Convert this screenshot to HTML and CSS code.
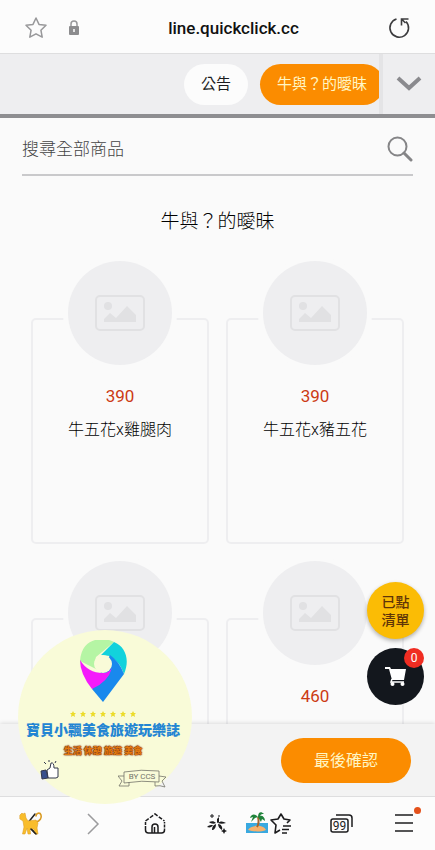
FILE: index.html
```html
<!DOCTYPE html>
<html lang="zh-Hant">
<head>
  <meta charset="UTF-8" />
  <meta name="viewport" content="width=device-width, initial-scale=1.0" />
  <title>line.quickclick.cc</title>
  <link rel="stylesheet" href="styles.css">
</head>
<body>
  <!-- image placeholder shared by the product cards -->
  <svg class="defs" width="0" height="0" aria-hidden="true">
    <symbol id="no-photo" viewBox="0 0 50 36">
      <rect x="1" y="1" width="48" height="34" rx="4" fill="none" stroke="#e1e1e3" stroke-width="2" />
      <circle cx="13" cy="11" r="4" fill="#e1e1e3" />
      <path d="M9 27v-3l6-6 6 5 11-12 9 9v7z" fill="#e1e1e3" />
    </symbol>
  </svg>

  <header class="address-bar">
    <button class="icon-button" type="button" aria-label="加入書籤">
      <svg width="24" height="24" viewBox="0 0 24 24" fill="none" stroke="#98989a" stroke-width="1.5" stroke-linejoin="round">
        <path d="M12 2l3 6.400 7 .9-5.100 4.900 1.300 7L12 17.800 5.800 21.200l1.300-7L2 9.300l7-.9z" />
      </svg>
    </button>
    <svg class="lock" width="12" height="16" viewBox="0 0 12 16">
      <path d="M3 7V4a3 3 0 0 1 6 0v3" fill="none" stroke="#98989a" stroke-width="1.500" />
      <rect x="1" y="6" width="10" height="9" rx="1" fill="#8c8c8e" />
      <path d="M6 9v3" stroke="#fff" stroke-width="1.500" />
    </svg>
    <span class="url">line.quickclick.cc</span>
    <button class="icon-button" type="button" aria-label="重新整理">
      <svg width="24" height="24" viewBox="0 0 24 24" fill="none" stroke="#3c3c3e" stroke-width="1.600">
        <path d="M9.500 3a9.300 9.300 0 1 0 9.500 2.500M14.500 9.500V3h7M14.500 3l4 4" />
      </svg>
    </button>
  </header>

  <nav class="categories">
    <div class="category-list">
      <a class="category" href="#">公告</a>
      <a class="category active" href="#">牛與？的曖昧</a>
    </div>
    <button class="category-toggle" type="button" aria-label="展開分類">
      <svg width="26" height="18" viewBox="0 0 26 18" fill="none" stroke="#8a8a8e" stroke-width="4">
        <path d="M2 3l11 10L24 3" />
      </svg>
    </button>
  </nav>

  <main class="menu">
    <form class="search">
      <input type="search" aria-label="搜尋全部商品" placeholder="搜尋全部商品" />
      <button class="icon-button" type="submit" aria-label="搜尋">
        <svg width="26" height="26" viewBox="0 0 26 26" fill="none" stroke="#858587">
          <circle cx="10.500" cy="10.500" r="9" stroke-width="2" />
          <path d="M17 17l7 7" stroke-width="3" stroke-linecap="round" />
        </svg>
      </button>
    </form>

    <h1>牛與？的曖昧</h1>

    <div class="products">
      <article class="product">
        <div class="photo"><svg width="50" height="36"><use href="#no-photo" /></svg></div>
        <p class="price">390</p>
        <h2>牛五花x雞腿肉</h2>
      </article>
      <article class="product">
        <div class="photo"><svg width="50" height="36"><use href="#no-photo" /></svg></div>
        <p class="price">390</p>
        <h2>牛五花x豬五花</h2>
      </article>
      <article class="product">
        <div class="photo"><svg width="50" height="36"><use href="#no-photo" /></svg></div>
      </article>
      <article class="product">
        <div class="photo"><svg width="50" height="36"><use href="#no-photo" /></svg></div>
        <p class="price">460</p>
      </article>
    </div>
  </main>

  <div class="confirm-bar">
    <button class="confirm" type="button">最後確認</button>
  </div>

  <footer class="toolbar">
    <button class="icon-button" type="button" aria-label="上一頁">
      <svg width="26" height="26" viewBox="0 0 26 26" fill="none" stroke-linecap="round" stroke-linejoin="round">
        <path d="M17 3l-8 10 8 9" stroke="#222" stroke-width="1.500" />
        <path d="M18 11c4-1 6-4 5-7s-5-2-5 1" stroke="#d99a22" stroke-width="1.600" />
        <path d="M2 4l2-2 1 1 2-1 1 5 2 3 8-1 2 3-1 5 1 6h-3l-1-5-4 .5.500 4.500H10l-1-6-2 6H4.500l1.500-7-1-6-3-2z" fill="#f9bd2b" stroke="#dfa023" stroke-width=".6" />
        <path d="M13 18l5 5" stroke="#222" stroke-width="1.500" />
      </svg>
    </button>
    <button class="icon-button" type="button" aria-label="下一頁">
      <svg width="26" height="26" viewBox="0 0 26 26" fill="none" stroke="#9b9b9d" stroke-width="1.500">
        <path d="M8 3l10 10L8 23" />
      </svg>
    </button>
    <button class="icon-button" type="button" aria-label="首頁">
      <svg width="26" height="26" viewBox="0 0 26 26" fill="none" stroke="#1c1c1e" stroke-width="1.500">
        <path d="M3.500 10L13 3l9.500 7" stroke-dasharray="4 1.500" />
        <path d="M3.500 11v8q0 3 3 3h13q3 0 3-3v-8" stroke-dasharray="3 1 28 1" />
        <path d="M10 22v-6q0-3 3-3t3 3v6M12.500 16v6" />
      </svg>
    </button>
    <button class="icon-button" type="button" aria-label="探索">
      <svg width="26" height="26" viewBox="0 0 26 26" fill="#1c1c1e">
        <path d="M5 11c3-1 5-1 7 1-2 1-5 1-7-1zM14 12c2-2 5-2 8 0-3 1-6 1-8 0zM12 13c0 4-2 6-4 6 0-3 1-5 4-6zM14 13c3 0 5 3 4 6-2-1-4-3-4-6zM3 16c2-2 4-2 6-2-1 2-3 3-6 2zM13 8l2-2v5l-2 1zM20 17l1 2 2 1-2 1-1 2-1-2-2-1 2-1z" />
        <path d="M8 3v4M6 5h4M15 4v2" fill="none" stroke="#1c1c1e" />
      </svg>
    </button>
    <button class="icon-button bookmarks" type="button" aria-label="書籤">
      <svg width="46" height="26" viewBox="0 0 46 26" fill="none">
        <path d="M0 12h22v10H0z" fill="#39a9e0" />
        <path d="M2 19c2-5 15-6 18 0-5 2-13 2-18 0z" fill="#f6b16c" />
        <path d="M11 16c2-3 2-6 1-10" stroke="#a5652d" stroke-width="2" />
        <path d="M12 6C9 2 5 3 4 7l3-1-2 5 4-4 3-1 3 5 1-3 3 2c0-4-3-6-5-5 1-2 2-2 4-2-3-3-6-2-6 3z" fill="#20833b" />
        <path d="M41 12l3-3-6-1-3-5-3 5-7 1 5 5-1 8 5-3" stroke="#1c1c1e" stroke-width="1.600" stroke-linejoin="round" />
        <path d="M37 15h8M36 18.500h7M36 22h5" stroke="#1c1c1e" stroke-width="1.500" />
      </svg>
    </button>
    <button class="icon-button" type="button" aria-label="分頁">
      <svg width="26" height="26" viewBox="0 0 26 26" fill="none" stroke="#1c1c1e" stroke-width="1.500">
        <path d="M7 4h13q3 0 3 3v9" />
        <rect x="2" y="8" width="17" height="13" rx="2" />
        <text class="tab-count" x="10.500" y="19" text-anchor="middle">99</text>
      </svg>
    </button>
    <button class="icon-button" type="button" aria-label="選單">
      <svg width="26" height="26" viewBox="0 0 26 26" stroke="#1c1c1e" stroke-width="1.600">
        <path d="M4 4h18M4 12h18M4 20h18" />
      </svg>
      <span class="dot"></span>
    </button>
  </footer>

  <div class="floating">
    <button class="ordered" type="button">已點<br>清單</button>
    <button class="cart" type="button" aria-label="購物車">
      <svg width="24" height="24" viewBox="0 0 24 24" fill="#fff">
        <path d="M1 2h5l1 2h15l-2 11H8L5 4H1z" />
        <path d="M8 14l-1 3h13" fill="none" stroke="#fff" stroke-width="1.500" />
        <circle cx="8.500" cy="19" r="2" />
        <circle cx="18.500" cy="19" r="2" />
      </svg>
      <span class="badge">0</span>
    </button>
  </div>

  <div class="sticker">
    <svg class="pin" width="48" height="62" viewBox="0 0 48 62">
      <path d="M1 21C3-6 29-2 35 2L17 17q-3 8 4 14z" fill="#b5f5a4" />
      <path d="M22 15L35 2c12 5 16 18 10 32q-4-12-14-18z" fill="#12d2dc" />
      <path d="M31 15q9 6 14 19L24 62 13 49z" fill="#1989ed" />
      <path d="M1 20q8 13 23 13 6 0 9-5-4 14-20 21Q1 34 1 20z" fill="#f41bfb" />
      <circle cx="24" cy="24" r="9" fill="#f9fbd8" />
    </svg>
    <svg class="stars" width="66" height="6" viewBox="0 0 66 6" fill="#ecdc2a">
      <defs>
        <path id="star" d="M3 0l1 2h2L4.500 3.500 5 6 3 4.700 1 6l.5-2.500L0 2h2z" />
      </defs>
      <use href="#star" />
      <use href="#star" x="10" />
      <use href="#star" x="20" />
      <use href="#star" x="30" />
      <use href="#star" x="40" />
      <use href="#star" x="50" />
      <use href="#star" x="60" />
    </svg>
    <div class="sticker-title">寶貝小飄美食旅遊玩樂誌</div>
    <div class="sticker-tags">生活 休憩 旅遊 美食</div>
    <div class="sticker-foot">
      <svg class="thumb" width="20" height="22" viewBox="0 0 20 22" fill="#fff" stroke="#33384d" stroke-width="1">
        <path d="M7 11l3-2 1-5q3-1 3 5h4v9l-2 1H8z" />
        <path d="M1 12l5-1 2 8-6 1z" fill="#39508d" />
        <path d="M6 5L4 3M9 3V1M15 4l1-2" />
      </svg>
      <svg width="48" height="20" viewBox="0 0 48 20" fill="none" stroke="#74746a" stroke-width=".8">
        <path d="M6 3q17-3 35-1v11q-17-2-35 1zM6 7H0l4 5-3 5h10v-4M41 7l7 1-4 4 3 6q-5-2-10-1v-4" />
        <text class="ribbon-text" x="24" y="10" text-anchor="middle">BY CCS</text>
      </svg>
    </div>
  </div>
</body>
</html>
```

FILE: styles.css
```css
* { box-sizing: border-box; margin: 0; padding: 0; }
body {
  font-family: Roboto, "Noto Sans CJK TC", sans-serif;
  background: #fafafa;
  color: #1c1c1e;
  height: 100vh;
  display: flex;
  flex-direction: column;
  position: relative;
  overflow: hidden;
}
button {
  font-family: inherit;
  border: none;
  background: none;
  cursor: pointer;
}
a { text-decoration: none; }
svg { display: block; }
.defs { position: absolute; }
.icon-button { position: relative; }

.address-bar {
  display: flex;
  align-items: center;
  height: 54px;
  padding: 2px 24px 0;
  background: #fcfcfc;
  border-bottom: 1px solid #dededf;
}
.lock { margin-left: 20px; }
.url {
  flex: 1;
  text-align: center;
  font-size: 17px;
  font-weight: 500;
  color: #111;
}

.categories {
  display: flex;
  height: 64px;
  background: #eeeef0;
  border-bottom: 4px solid #8e8e91;
}
.category-list {
  flex: 1;
  display: flex;
  justify-content: flex-end;
  align-items: center;
  gap: 12px;
  overflow: hidden;
}
.category {
  padding: 0 17px;
  border-radius: 21px;
  background: #fcfcfc;
  color: #1c1c1e;
  font-size: 15px;
  line-height: 41px;
  white-space: nowrap;
}
.category.active {
  margin-right: -5px;
  background: #fb8c00;
  color: #fff6c4;
}
.category-toggle {
  display: flex;
  justify-content: center;
  align-items: center;
  width: 56px;
  border-left: 4px solid #e4e4e6;
}

.menu {
  flex: 1;
  min-height: 0;
  overflow: hidden;
  padding: 0 22px;
}
.search {
  display: flex;
  align-items: center;
  height: 58px;
  padding-top: 6px;
  border-bottom: 2px solid #c9c9cb;
}
.search input {
  flex: 1;
  min-width: 0;
  border: none;
  outline: none;
  background: none;
  font-family: inherit;
  font-size: 17px;
  font-weight: 300;
}
.search input::placeholder { color: #444; }
.menu h1 {
  margin-top: 32px;
  text-align: center;
  color: #000;
  font-size: 19px;
  font-weight: 300;
  line-height: 28px;
}
.products {
  display: grid;
  grid-template-columns: 1fr 1fr;
  gap: 74px 17px;
  padding: 82px 9px 0;
}
.product {
  display: flex;
  flex-direction: column;
  align-items: center;
  height: 226px;
  border: 2px solid #eeeef0;
  border-radius: 5px;
}
.photo {
  display: flex;
  justify-content: center;
  align-items: center;
  width: 104px;
  height: 104px;
  margin-top: -59px;
  border-radius: 50%;
  background: #eeeef0;
  box-shadow: 0 0 0 5px #fafafa;
}
.price {
  margin-top: 19px;
  color: #cc3a14;
  font-size: 17px;
  line-height: 24px;
}
.product h2 {
  margin-top: 10px;
  color: #000;
  font-size: 16px;
  font-weight: 300;
  line-height: 24px;
}

.confirm-bar {
  display: flex;
  justify-content: flex-end;
  align-items: center;
  height: 72px;
  padding: 0 24px;
  background: #f3f3f3;
  box-shadow: 0 -1px 4px rgba(0,0,0,0.12);
}
.confirm {
  width: 130px;
  height: 45px;
  padding-bottom: 2px;
  border-radius: 23px;
  background: #fb8c00;
  color: #fff6c4;
  font-size: 16px;
}

.toolbar {
  display: grid;
  grid-template-columns: repeat(7, 1fr);
  justify-items: center;
  align-items: center;
  height: 54px;
  background: #fcfcfc;
  border-top: 1px solid #dededf;
}
/* the star keeps its column, the island hangs out to the left */
.bookmarks { margin-left: -22px; }
.tab-count {
  fill: #1c1c1e;
  stroke: none;
  font-size: 12px;
}
.dot {
  position: absolute;
  top: -4px;
  right: -4px;
  width: 7px;
  height: 7px;
  border-radius: 50%;
  background: #e4511b;
}

.floating {
  position: absolute;
  right: 11px;
  bottom: 145px;
  display: flex;
  flex-direction: column;
  gap: 9px;
}
.ordered, .cart {
  display: flex;
  justify-content: center;
  align-items: center;
  width: 57px;
  height: 57px;
  border-radius: 50%;
}
.ordered {
  background: #fbbc05;
  box-shadow: 0 2px 4px rgba(0,0,0,0.3);
  color: #5f3408;
  font-size: 14px;
  font-weight: 500;
  line-height: 18px;
}
.cart {
  position: relative;
  background: #13171d;
}
.badge {
  position: absolute;
  top: 0;
  right: 0;
  width: 20px;
  border-radius: 50%;
  background: #f02d22;
  color: #fff;
  font-size: 12px;
  line-height: 20px;
}

.sticker {
  position: absolute;
  left: 18px;
  bottom: 46px;
  display: flex;
  flex-direction: column;
  align-items: center;
  width: 174px;
  height: 174px;
  padding: 10px 4px 0 0;
  border-radius: 50%;
  background: #f9fbd8;
  white-space: nowrap;
}
.stars { margin-top: 9px; }
.sticker-title {
  margin-top: 2px;
  color: #2385d3;
  font-size: 14px;
  font-weight: 900;
  line-height: 22px;
}
.sticker-tags {
  margin-top: 2px;
  color: #e27a12;
  font-size: 9px;
  font-weight: 900;
  line-height: 16px;
  text-shadow: 0 0 1px #6b2204, 0 0 1px #6b2204, 0 0 2px #8a2d08;
}
.sticker-foot {
  display: flex;
  justify-content: space-between;
  align-items: flex-end;
  width: 126px;
}
.thumb { margin-bottom: 8px; }
.ribbon-text {
  fill: #74746a;
  stroke: none;
  font-size: 8px;
}
```
